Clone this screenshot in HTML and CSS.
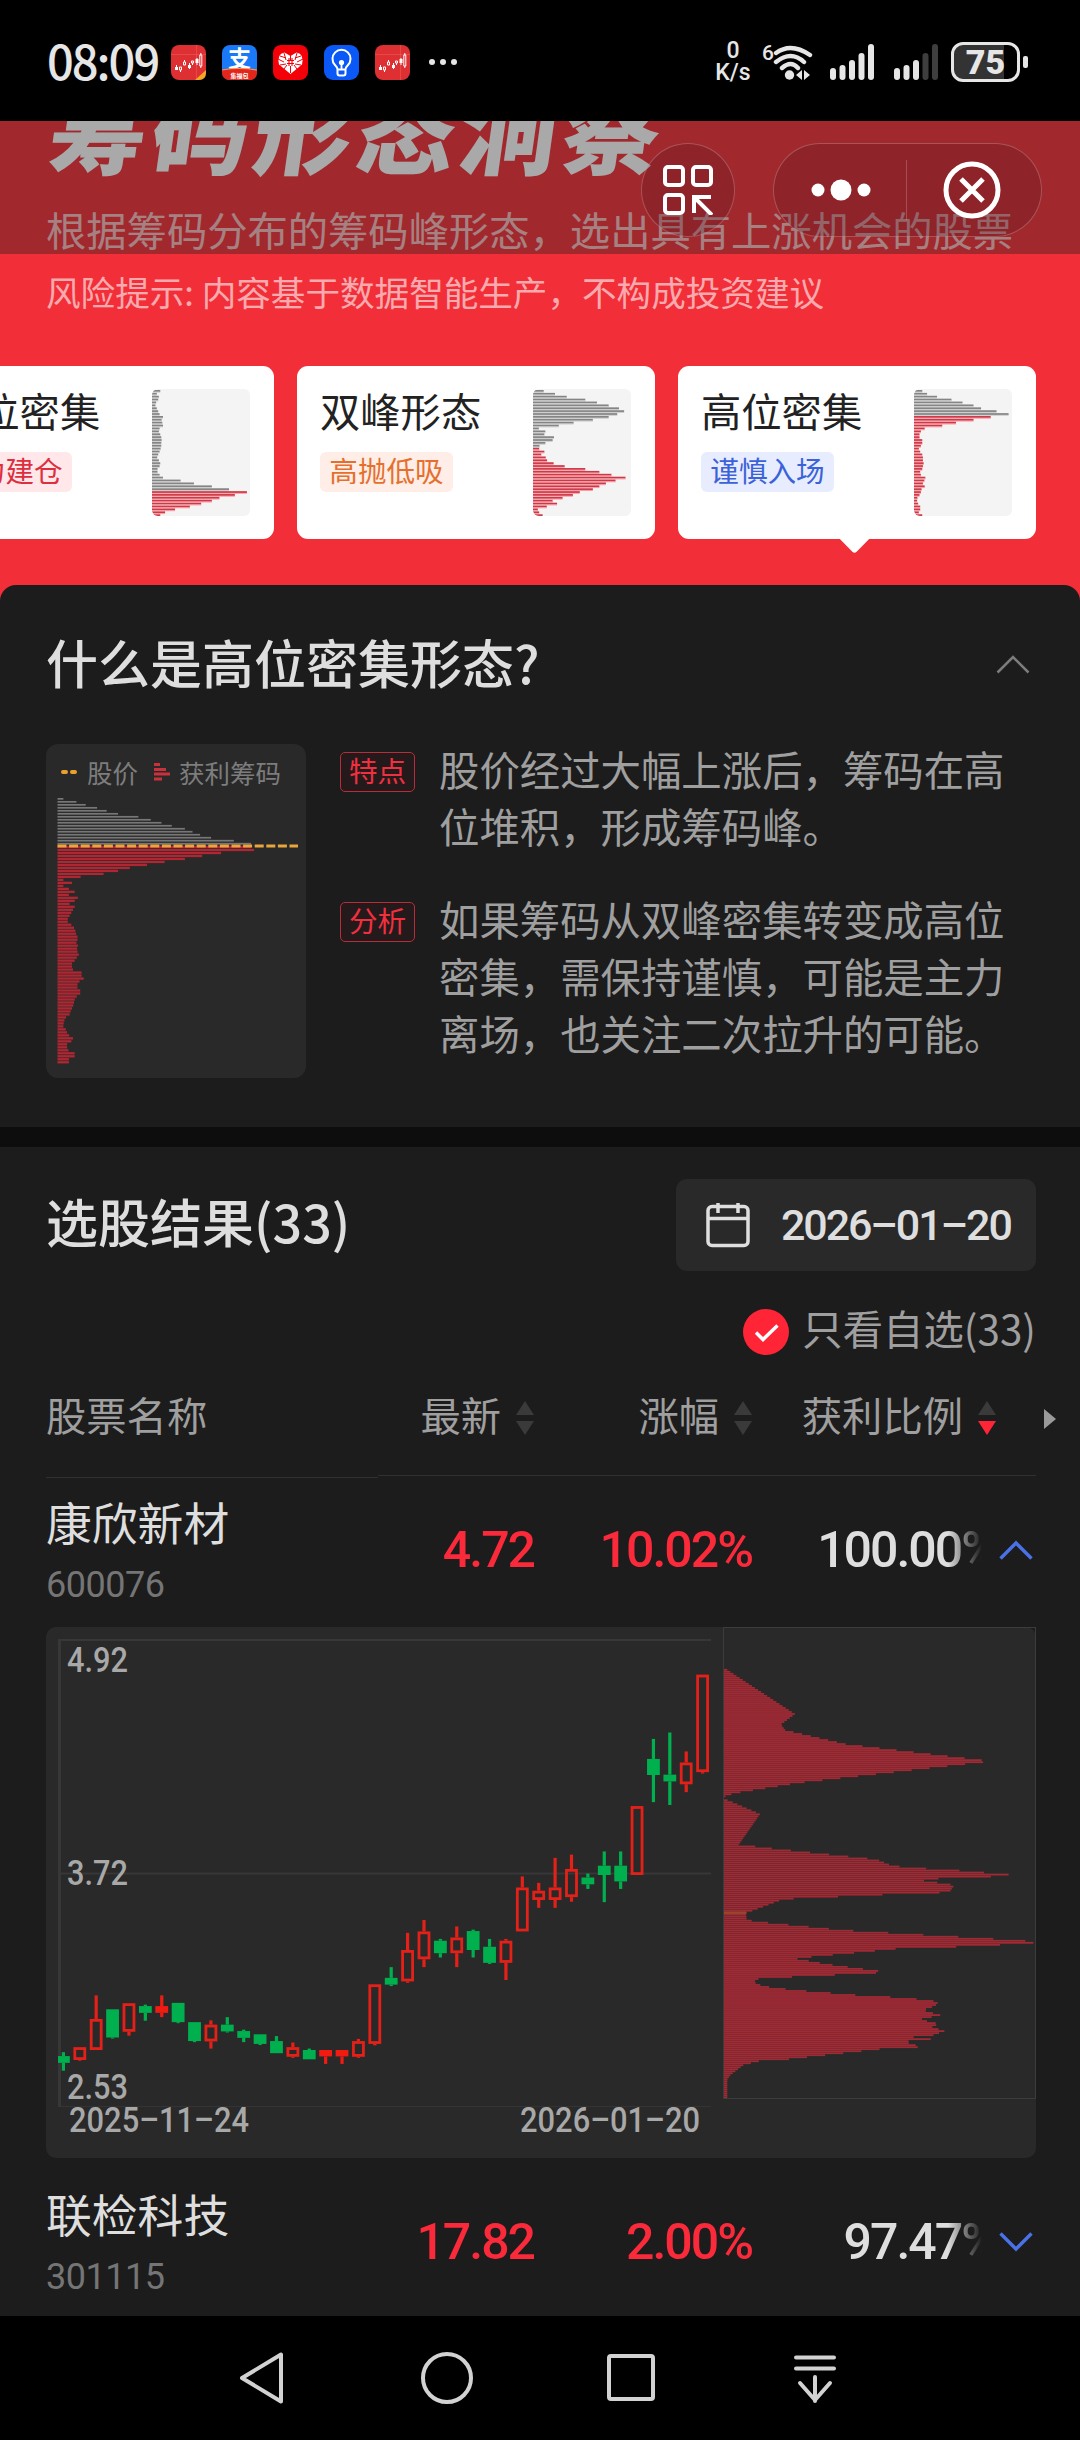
FILE: index.html
```html
<!doctype html>
<html lang="zh-CN">
<head>
<meta charset="utf-8">
<title>筹码形态洞察</title>
<link rel="stylesheet" href="styles.css">
</head>

<body>
<div class="screen">
	<div class="status">
		<span class="time">08:09</span>
		<div class="apps">
			<svg class="app" viewBox="0 0 35 35"><rect width="35" height="35" rx="8" fill="#de3033"/><path d="M0 9.5h35M25.500 0v35" stroke="#e85a5a" stroke-width=".6"/><g fill="#fff"><path d="M4 22h3v3H4zM5 20h1v5H5zM17 20h3v3h-3zM18 18h1v6h-1zM24.500 14h3v4h-3zM25.500 13h1v7h-1z"/></g><g fill="none" stroke="#fff"><path d="M8.500 22h2v3h-2zM9.500 25v2M12.500 17h2v3h-2zM13.500 15v2M20.500 16h2v2h-2zM21.500 18v2M28.800 10h2v11h-2zM29.800 8v2M29.800 21v2"/></g><path d="M24 35l11-10v3q0 7-7 7z" fill="#f5a623"/></svg>
			<svg class="app" viewBox="0 0 35 35"><rect width="35" height="35" rx="8" fill="#1a79f7"/><text x="17.500" y="22" text-anchor="middle" font-size="23" font-weight="700" fill="#fff">支</text><path d="M0 25q17-3 35 0v2q0 8-8 8H8q-8 0-8-8z" fill="#e3261b"/><path d="M0 25q17-3 35 0" fill="none" stroke="#ff9350" stroke-width="1.200"/><text x="17.500" y="33" text-anchor="middle" font-size="6" font-weight="700" fill="#fff">集福包</text></svg>
			<svg class="app" viewBox="0 0 35 35"><rect width="35" height="35" rx="8" fill="#f40009"/><path d="M17.500 29L6 19.500Q3.500 9 11.500 7.500L17.500 11l6-3.500Q31.500 9 29 19.500z" fill="#fff"/><path d="M17.500 10v5M17.500 21v7M5 14l6 3M7 11l6 2M30 14l-6 3M28 11l-6 2M7 20l6-1M28 20l-6-1M11 24l3-4M24 24l-3-4M11 8l2 7M24 8l-2 7" stroke="#f40009" stroke-width="1"/><path d="M14 15.500h7M14 18.500h7M16 13v8M19 13v8" stroke="#f40009" stroke-width="1.100"/></svg>
			<svg class="app" viewBox="0 0 35 35"><rect width="35" height="35" rx="9" fill="#0a59f7"/><path d="M13.500 24.500q0-2-2.500-4.500a9 9 0 1 1 13 0q-2.500 2.500-2.500 4.500zM13.500 24.500v4q0 2 2 2h4q2 0 2-2v-4" fill="none" stroke="#fff" stroke-width="2"/><circle cx="17.500" cy="17.500" r="2.600" fill="#fff"/><path d="M17.500 18v7" stroke="#fff" stroke-width="1.800"/></svg>
			<svg class="app" viewBox="0 0 35 35"><rect width="35" height="35" rx="8" fill="#de3033"/><path d="M0 9.500h35M25.500 0v35" stroke="#e85a5a" stroke-width=".6"/><g fill="#fff"><path d="M4 22h3v3H4zM5 20h1v5H5zM17 20h3v3h-3zM18 18h1v6h-1zM24.500 14h3v4h-3zM25.500 13h1v7h-1z"/></g><g fill="none" stroke="#fff"><path d="M8.500 22h2v3h-2zM9.500 25v2M12.500 17h2v3h-2zM13.500 15v2M20.500 16h2v2h-2zM21.500 18v2M28.800 10h2v11h-2zM29.800 8v2M29.800 21v2"/></g></svg>
		</div>
		<svg class="more" viewBox="0 0 30 8" fill="#e6e6e6"><circle cx="4" cy="4" r="3"/><circle cx="15" cy="4" r="3"/><circle cx="26" cy="4" r="3"/></svg>
		<div class="speed"><span>0</span><span>K/s</span></div>
		<svg class="wifi" viewBox="0 0 52 40" fill="none" stroke="#e6e6e6" stroke-width="4.400" stroke-linecap="round"><text x="0" y="18" font-size="21" class="gen">6</text><path d="M14 11Q29 0 48 13M14 20Q29 8 42 20M20 26Q29 18 36 26"/><circle cx="27.500" cy="33" r="4.700" fill="#e6e6e6" stroke="none"/><path d="M34 33l6-5v10zM48 33l-6 5V28z" fill="#e6e6e6" stroke="none"/></svg>
		<svg class="signal" viewBox="0 0 45 36" fill="#e6e6e6"><rect y="24" width="6" height="12" rx="3"/><rect x="9.500" y="21" width="6" height="15" rx="3"/><rect x="19" y="16" width="6" height="20" rx="3"/><rect x="28.500" y="9" width="6" height="27" rx="3"/><rect x="38" width="6" height="36" rx="3"/></svg>
		<svg class="signal" viewBox="0 0 45 36" fill="#e6e6e6"><rect y="24" width="6" height="12" rx="3"/><rect x="9.500" y="21" width="6" height="15" rx="3"/><rect x="19" y="16" width="6" height="20" rx="3"/><g fill="#3e3e3e"><rect x="28.500" y="9" width="6" height="27" rx="3"/><rect x="38" width="6" height="36" rx="3"/></g></svg>
		<div class="battery"><b>75</b></div><i class="pole"></i>
	</div>

	<div class="page">
		<div class="hero">
			<h1>筹码形态洞察</h1>
			<p class="sub">根据筹码分布的筹码峰形态，选出具有上涨机会的股票</p>
			<p class="risk">风险提示: 内容基于数据智能生产，不构成投资建议</p>
			<div class="tabs">
				<div class="tab">
					<div><h3>低位密集</h3><span class="tag red">主力建仓</span></div>
					<svg class="mini" id="mini1" viewBox="0 0 285 127" preserveAspectRatio="none"></svg>
				</div>
				<div class="tab">
					<div><h3>双峰形态</h3><span class="tag orange">高抛低吸</span></div>
					<svg class="mini" id="mini2" viewBox="0 0 285 127" preserveAspectRatio="none"></svg>
				</div>
				<div class="tab on">
					<div><h3>高位密集</h3><span class="tag blue">谨慎入场</span></div>
					<svg class="mini" id="mini3" viewBox="0 0 285 127" preserveAspectRatio="none"></svg>
				</div>
			</div>
		</div>

		<div class="mask">
			<div class="scan"><svg viewBox="0 0 50 50" fill="none" stroke="#fff" stroke-width="4"><rect x="2" y="2" width="18" height="18" rx="3"/><rect x="30" y="2" width="18" height="18" rx="3"/><rect x="2" y="30" width="18" height="18" rx="3"/><path d="M31 48V32h17M32 33l17 17"/></svg></div>
			<div class="capsule">
				<svg class="dots" viewBox="0 0 60 22" fill="#fff"><circle cx="7" cy="11" r="6.500"/><circle cx="30" cy="11" r="10.500"/><circle cx="53" cy="11" r="6.500"/></svg>
				<i></i>
				<svg class="close" viewBox="0 0 58 58" fill="none" stroke="#fff" stroke-width="5"><circle cx="29" cy="29" r="26"/><path d="M18 18l22 22M40 18L18 40"/></svg>
			</div>
		</div>

		<div class="panel about">
			<div class="about-hd">
				<h2>什么是高位密集形态?</h2>
				<svg class="fold" viewBox="0 0 34 20" fill="none" stroke="#7c7c7c" stroke-width="2.500"><path d="M1.500 18.500L17 3l15.500 15.500"/></svg>
			</div>
			<div class="about-bd">
				<div class="figure">
					<div class="legend">
						<svg class="dash" viewBox="0 0 16 4"><path d="M2 2h3M11 2h3" stroke="#e9a02f" stroke-width="4" stroke-linecap="round"/></svg>
						<span>股价</span>
						<svg class="chip" viewBox="0 0 16 18" fill="#c9313c"><path d="M0 0h6v3H0zM0 5h12v3H0zM0 9.500h16v3H0zM0 14.500h8v3H0z"/></svg>
						<span>获利筹码</span>
					</div>
					<svg class="bars" id="shape" viewBox="0 0 241 268"></svg>
				</div>
				<dl>
					<dt>特点</dt>
					<dd>股价经过大幅上涨后，筹码在高位堆积，形成筹码峰。</dd>
					<dt>分析</dt>
					<dd>如果筹码从双峰密集转变成高位密集，需保持谨慎，可能是主力离场，也关注二次拉升的可能。</dd>
				</dl>
			</div>
		</div>

		<div class="panel result">
			<div class="result-hd">
				<h2>选股结果(33)</h2>
				<div class="date">
					<svg viewBox="0 0 44 46" fill="none" stroke="#dedede" stroke-width="3.500"><rect x="2" y="4.500" width="40" height="39" rx="4"/><path d="M2 16.500h40M12 1v10M32 1v10"/></svg>
					<span>2026–01–20</span>
				</div>
			</div>
			<div class="only">
				<svg viewBox="0 0 46 46"><circle cx="23" cy="23" r="23" fill="#ff2436"/><path d="M13 23.500l7 7 14.500-14" fill="none" stroke="#fff" stroke-width="3.400"/></svg>
				<span>只看自选(33)</span>
			</div>
			<div class="row head">
				<span>股票名称</span>
				<span class="col">最新<i class="sort"></i></span>
				<span class="col">涨幅<i class="sort"></i></span>
				<span class="col">获利比例<i class="sort down"></i></span>
				<i class="next"></i>
			</div>
			<div class="lines"><i></i><i></i></div>
			<div class="row">
				<div class="name"><b>康欣新材</b><span>600076</span></div>
				<span class="num up">4.72</span>
				<span class="num up">10.02%</span>
				<span class="num fade">100.00%</span>
				<svg class="arrow" viewBox="0 0 34 20" fill="none" stroke="#4a72e6" stroke-width="3.400"><path d="M1.500 18.500L17 3l15.500 15.500"/></svg>
			</div>
			<div class="chart">
				<svg id="kline" viewBox="0 0 677 531"></svg>
				<svg id="chips" viewBox="0 0 313 472"></svg>
			</div>
			<div class="row">
				<div class="name"><b>联检科技</b><span>301115</span></div>
				<span class="num up">17.82</span>
				<span class="num up">2.00%</span>
				<span class="num fade">97.47%</span>
				<svg class="arrow" viewBox="0 0 34 20" fill="none" stroke="#4a72e6" stroke-width="3.400"><path d="M1.500 1.500L17 17L32.500 1.500"/></svg>
			</div>
		</div>
	</div>

	<div class="navbar">
		<svg viewBox="0 0 56 56"><path d="M7 28L46 4.500v47z"/></svg>
		<svg viewBox="0 0 56 56"><circle cx="28" cy="28" r="24"/></svg>
		<svg viewBox="0 0 56 56"><rect x="6" y="6" width="44" height="43" rx="2"/></svg>
		<svg viewBox="0 0 56 56"><path d="M9 7.500h38M9 18.500h38M28 27v24M13 33l15 17 15-17"/></svg>
	</div>
</div>
<script src="main.js"></script>
</body>
</html>
```
FILE: styles.css
```css
*{ box-sizing:border-box; margin:0; padding:0;}
body{ background:#000; font-family:"Noto Sans CJK SC",sans-serif; color:#ddd;}
i{ font-style:normal;}
svg{ display:block; flex:none;}
.screen{ width:1080px; height:2440px; overflow:hidden; display:flex; flex-direction:column;}

/* 状态栏 */
.status{ height:121px; flex:none; display:flex; align-items:center; padding:3px 52px 0 47px; color:#e6e6e6;}
.time{ width:124px; margin-top:-5px; font-size:47px; line-height:60px; font-weight:500; letter-spacing:-2px; white-space:nowrap;}
.apps{ display:flex; gap:16px;}
.app{ width:35px; height:35px;}
.more{ width:30px; height:8px; margin-left:18px;}
.speed{ width:40px; margin-left:255px; text-align:center; font:500 23px/22px Roboto,sans-serif;}
.speed span{ display:block;}
.wifi{ width:52px; height:40px; margin-left:9px;}
.gen{ fill:#e6e6e6; stroke:none; font-family:Roboto,sans-serif; font-weight:500;}
.signal{ width:45px; height:36px; margin-left:16px;}
.signal + .signal{ margin-left:19px;}
.battery{ width:69px; height:40px; margin-left:12px; border:3px solid #e6e6e6; border-radius:12px; background:linear-gradient(90deg,#333 50px,#000 50px); text-align:center; font:700 34px/34px Roboto,sans-serif;}
.pole{ width:5px; height:12px; margin-left:3px; border-radius:2px; background:#e6e6e6; flex:none;}

.page{ height:2195px; flex:none; overflow:hidden; position:relative; background:#f22f38;}

/* 头部 */
.hero{ height:464px; overflow:hidden;}
.hero h1{ margin:-57px 0 0 51px; font-size:98px; line-height:120px; font-weight:900; letter-spacing:4.6px; color:#fff; transform:skewX(-8deg); white-space:nowrap;}
.sub{ margin:16px 0 0 46px; font-size:40.3px; line-height:58px; color:rgba(255,255,255,.7); white-space:nowrap;}
.risk{ margin:8px 0 0 46px; font-size:34.6px; line-height:50px; color:rgba(255,255,255,.6); white-space:nowrap;}
.tabs{ display:flex; gap:23px; margin:50px 0 0 -84px;}
.tab{ width:358px; height:173px; flex:none; display:flex; justify-content:space-between; padding:23px 24px 0 23px; background:#fff; border-radius:11px; position:relative;}
.tab h3{ margin-top:-2px; font-size:40.3px; line-height:46px; font-weight:400; color:#222; white-space:nowrap;}
.tag{ display:block; width:133px; height:40px; margin-top:19px; border-radius:6px; text-align:center; font-size:28.6px; line-height:35px;}
.red{ color:#dd2f3e; background:#ffe7ea;}
.orange{ color:#e5702e; background:#ffede7;}
.blue{ color:#3b62d8; background:#e7edff;}
.mini{ width:98px; height:127px; border-radius:6px; background:#f4f4f4;}
.on:after{ content:""; position:absolute; left:165px; bottom:-10px; width:23px; height:23px; background:#fff; border-radius:3px; transform:rotate(45deg);}

.mask{ position:absolute; left:0; top:0; width:1080px; height:133px; padding:22px 38px 0 641px; display:flex; justify-content:space-between; background:rgba(31,31,31,.385);}
.scan,.capsule{ height:94px; border:1px solid rgba(255,255,255,.22); border-radius:47px; background:rgba(90,20,30,.25); display:flex; align-items:center;}
.scan{ width:94px; padding-left:21px;}
.scan svg{ width:50px; height:50px;}
.capsule{ width:269px; padding-left:37px;}
.capsule i{ width:1px; height:60px; margin:0 36px 0 35px; background:rgba(255,255,255,.2);}
.dots{ width:60px; height:22px;}
.close{ width:58px; height:58px;}

/* 形态说明 */
.panel{ background:#1c1c1c; padding:0 44px 0 46px; position:relative;}
.about{ height:542px; border-radius:16px 16px 0 0;}
.panel h2{ font-size:52px; font-weight:500; line-height:76px; color:#dedede; white-space:nowrap;}
.about-hd{ display:flex; justify-content:space-between; align-items:center; padding:39px 6px 0 0;}
.fold{ width:34px; height:20px; margin-top:4px;}
.about-bd{ display:flex; margin-top:44px;}
.figure{ width:260px; height:334px; flex:none; border-radius:12px; background:#292929; padding:9px 0 0 11px;}
.legend{ display:flex; align-items:center; height:37px; padding-left:4px; font-size:25.500px; color:#7d7d7d; white-space:nowrap;}
.dash{ width:16px; height:4px; margin-right:10px;}
.chip{ width:16px; height:18px; margin:0 9px 0 16px;}
.bars{ width:241px; height:268px; margin-top:8px;}
dl{ display:grid; grid-template-columns:75px 580px; column-gap:24px; row-gap:35px; margin:-4px 0 0 34px; align-content:start;}
dt{ width:75px; height:40px; margin-top:12px; border:1px solid #b72d39; border-radius:5px; background:#251a1b; color:#f0303f; font-size:28.6px; line-height:34px; text-align:center;}
dd{ width:570px; font-size:40.4px; line-height:57.3px; color:#9f9f9f;}

/* 选股结果 */
.result{ height:1189px; border-top:20px solid #0d0d0d;}
.result-hd{ display:flex; justify-content:space-between; padding-top:32px; height:124px;}
.result-hd h2{ margin-top:4px;}
.date{ width:360px; height:92px; display:flex; align-items:center; padding-left:30px; border-radius:11px; background:#292929; color:#dedede; font:500 43px/60px Roboto,sans-serif;}
.date svg{ width:44px; height:46px; margin-right:31px;}
.date span{ letter-spacing:-2.1px; white-space:nowrap;}
.only{ display:flex; justify-content:flex-end; align-items:center; height:60px; margin-top:31px; font-size:40.4px; color:#9f9f9f;}
.only svg{ width:46px; height:46px; margin-right:13px;}
.only span{ margin-top:-9px;}
.row{ display:grid; grid-template-columns:332px 156px 218px 244px 40px; height:151px; position:relative;}
.head{ height:114px; padding-bottom:12px; align-items:center; font-size:40.3px; color:#9f9f9f; white-space:nowrap;}
.col{ display:flex; justify-content:flex-end; align-items:center;}
.sort{ margin:10px 0 0 15px; display:flex; flex-direction:column; gap:6px;}
.sort:before,.sort:after{ content:""; border:9.5px solid transparent;}
.sort:before{ border-top:0; border-bottom:14px solid #3a3a3a;}
.sort:after{ border-bottom:0; border-top:14px solid #3a3a3a;}
.down:after{ border-top-color:#ff2436;}
.next{ position:absolute; right:-20px; top:47px; border:10.5px solid transparent; border-right:0; border-left:12px solid #9a9a9a;}
.lines{ display:flex; height:0;}
.lines i{ width:332px; height:1px; background:#303030; margin-top:1px;}
.lines i + i{ width:658px; margin-top:-1px;}
.name b{ display:block; margin-top:12px; font-size:45.8px; line-height:66px; font-weight:400; color:#dedede;}
.name span{ display:block; margin-top:10px; font:400 36px/42px Roboto,sans-serif; letter-spacing:-.5px; color:#757575;}
.num{ margin-top:44px; font:500 50px/60px Roboto,sans-serif; letter-spacing:-2px; text-align:right; color:#dedede; white-space:nowrap;}
.up{ color:#fb2a3b;}
.fade{ -webkit-mask-image:linear-gradient(90deg,#000 196px,transparent 230px); mask-image:linear-gradient(90deg,#000 196px,transparent 230px);}
.arrow{ width:34px; height:20px; margin:64px 0 0 3px;}
.chart{ display:flex; height:531px; margin-bottom:10px; border-radius:10px; background:#292929;}
#kline{ width:677px; height:531px;}
#chips{ width:313px; height:472px;}
.lab{ font:500 35px Roboto,sans-serif; fill:#a8a8a8;}

/* 导航键 */
.navbar{ height:124px; flex:none; display:flex; gap:128px; padding:34px 0 0 235px;}
.navbar svg{ width:56px; height:56px; fill:none; stroke:#d2d2d2; stroke-width:4; stroke-linejoin:round; stroke-linecap:round;}
```
FILE: main.js
```js
function get(id){ return document.getElementById(id); }
function rect(x,y,w,h,attr){
	return '<rect x="'+x+'" y="'+y+'" width="'+w+'" height="'+h+'" '+attr+'/>';
}

// 筹码小图: n 根之前为套牢盘(灰)，之后为获利盘(红)
function mini(id,n,arr){
	var s='';
	for(var i=0; i<arr.length; i++){
		var y=i*2.89+1;
		s+=rect(0,y.toFixed(2),arr[i],1.9,'fill="'+(i<n?'#858585':'#cc3a48')+'"');
		s+=rect(0,(y+1.7).toFixed(2),arr[i],1,'fill="'+(i<n?'#ccc':'#ff9ba4')+'"');
	}
	get(id).innerHTML=s;
}
mini('mini1',35,[24,14,20,18,12,10,14,18,22,32,28,30,32,22,20,24,27,28,27,27,25,22,18,15,20,24,22,16,16,22,32,83,122,174,224,276,241,196,174,143,110,67,38,24]);
mini('mini2',20,[31,64,98,152,186,220,250,265,245,220,174,118,75,17,36,33,61,57,36,19,18,33,24,37,41,60,92,152,193,228,269,240,212,193,174,136,116,86,57,70,40,14,18,28]);
mini('mini3',9,[24,38,67,109,141,173,195,240,275,223,173,122,82,31,20,16,16,24,24,20,14,18,24,26,26,28,26,24,18,20,33,30,26,31,22,20,16,10,9,12,18,18,14,24]);

// 说明图
var shape=[17,55,82,115,143,176,235,271,302,332,370,392,414,446,512,562,562,571,475,420,370,311,260,210,176,134,67,17,42,17,33,50,33,59,50,35,50,45,40,35,30,30,40,48,52,54,58,58,55,59,57,58,62,56,50,42,42,45,70,70,76,64,58,58,66,66,56,50,48,46,42,38,35,25,20,18,17,24,28,34,45,40,28,28,32,50,50,33,33];
var s='';
for(var i=0; i<shape.length; i++){
	s+=rect(.5,(i*2.99).toFixed(2),(shape[i]/2.904).toFixed(1),i<16?1.7:2.3,'fill="'+(i<16?'#777':'#b02733')+'"');
}
s+='<path d="M.5 48H241" stroke="#eaa63c" stroke-width="3.2" stroke-dasharray="9 2.6"/>';
get('shape').innerHTML=s;

// K线: [颜色, 最高, 实体上, 实体下, 最低]
var k=[['g',1210,1221,1240,1262],['r',1196,1196,1232,1234],['r',1051,1117,1204,1204],['g',1090,1090,1169,1172],['r',1073,1073,1153,1164],
['g',1077,1081,1100,1122],['f',1051,1081,1100,1112],['g',1072,1072,1126,1129],['g',1126,1126,1179,1182],['r',1121,1133,1180,1200],
['g',1112,1133,1152,1155],['g',1147,1151,1170,1182],['g',1160,1160,1187,1190],['g',1165,1179,1213,1213],['r',1183,1196,1223,1226],
['g',1200,1204,1230,1230],['f',1204,1204,1222,1243],['f',1204,1204,1222,1243],['r',1173,1179,1223,1226],['r',1020,1020,1187,1191],
['g',972,1002,1021,1025],['r',876,924,1012,1016],['r',840,872,950,972],['g',893,898,933,945],['r',858,889,933,972],
['g',867,871,924,945],['g',893,915,960,963],['r',893,898,960,1008],['r',718,749,872,872],['r',736,758,784,806],
['r',666,749,784,806],['r',657,697,776,789],['g',710,721,740,753],['g',648,688,714,790],['g',648,688,732,753],
['r',521,521,714,714],['g',333,389,434,510],['g',315,433,452,518],['r',368,399,460,482],['r',153,153,426,430]];
function py(v){ return +(v/2.8-7).toFixed(2); }
s='<path d="M12 13h653M12 246.500h653" stroke="#373737" stroke-width="2"/><path d="M12 479.500h653" stroke="#343434"/><path d="M13.500 12v468" stroke="#373737" stroke-width="3"/>';
for(i=0; i<k.length; i++){
	var c=k[i][0]=='g'?'#00b04f':'#e32119';
	if(k[i][0]=='f') c='#f21b12';
	var x=17.4+i*16.39;
	var h=py(k[i][1]),t=py(k[i][2]),b=py(k[i][3]),l=py(k[i][4]);
	var left=x-6.4,w=12.8;
	if(i==0){ left=12; w=11.8; }
	if(h<t) s+=rect(x-1.6,h,3.2,t-h,'fill="'+c+'"');
	if(l>b) s+=rect(x-1.6,b,3.2,l-b,'fill="'+c+'"');
	if(k[i][0]=='r') s+=rect(left+1.4,t+1.4,w-2.8,b-t-2.8,'fill="none" stroke-width="2.8" stroke="'+c+'"');
	else s+=rect(left,t,w,b-t,'fill="'+c+'"');
}
function lab(x,y,w,str){
	return '<text class="lab" x="'+x+'" y="'+y+'" textLength="'+w+'" lengthAdjust="spacingAndGlyphs">'+str+'</text>';
}
s+=lab(21,45,61,'4.92')+lab(21,258,61,'3.72')+lab(21,472,61,'2.53');
s+=lab(23,505,180,'2025–11–24')+lab(474,505,180,'2026–01–20');
get('kline').innerHTML=s;

// 筹码分布轮廓 [宽, 高度位置]
var p=[[10,137],[213,261],[171,290],[184,306],[365,345],[801,393],[220,454],[108,471],[28,483],[14,489],[0,492],[0,500],[14,503],[108,541],[44,627],[73,629],[121,635],[458,668],[505,686],[578,692],[680,697],[890,713],[734,718],[578,724],[691,740],[676,760],[533,764],[178,779],[66,818],[68,835],[88,841],[358,866],[900,895],[934,901],[827,907],[718,912],[528,917],[395,929],[213,945],[308,961],[495,984],[375,989],[261,995],[108,1000],[88,1011],[118,1023],[206,1033],[348,1044],[428,1050],[544,1055],[644,1066],[634,1078],[596,1090],[650,1104],[588,1116],[644,1128],[624,1138],[663,1148],[628,1160],[563,1166],[621,1171],[538,1178],[594,1193],[478,1198],[188,1228],[108,1232],[58,1244],[20,1271],[10,1284],[10,1338]];
s='';
var n=0;
for(var y=137; y<1337; y+=5.62){
	while(n<p.length-2 && p[n+1][1]<=y) n++;
	var r=(y-p[n][1])/(p[n+1][1]-p[n][1]);
	var wd=p[n][0]+(p[n+1][0]-p[n][0])*r;
	s+=rect(1,py(y),(wd/3).toFixed(1),1.8,'fill="#a12a35"');
}
s+=rect(1,284.500,22,2.400,'fill="#98462c"');
s+=rect(.5,.5,312,471,'fill="none" stroke="#3c3c3c"');
get('chips').innerHTML=s;
```
